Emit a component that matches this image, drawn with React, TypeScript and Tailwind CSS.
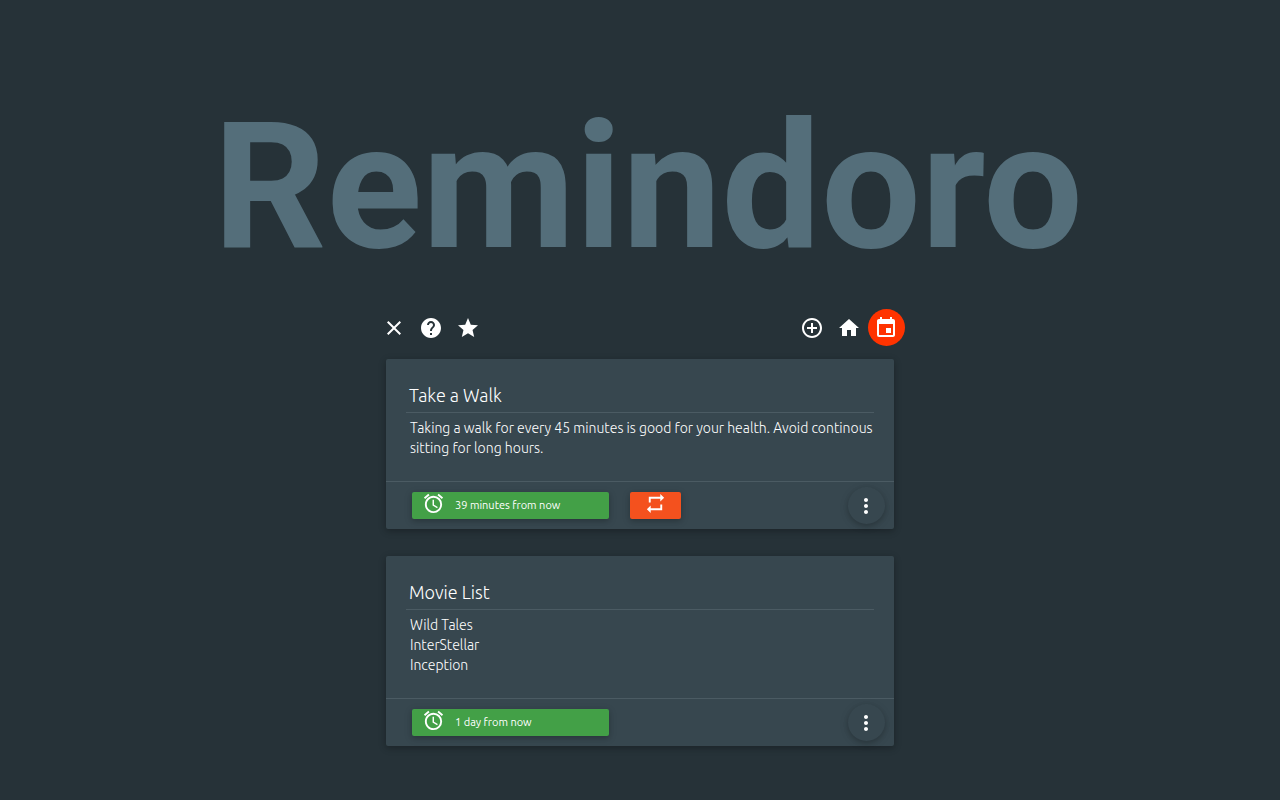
import React from "react";
import type { IconType } from "react-icons";
import {
  MdAccessAlarm,
  MdClose,
  MdControlPoint,
  MdEvent,
  MdHelp,
  MdHome,
  MdMoreVert,
  MdRepeat,
  MdStar,
} from "react-icons/md";

interface Reminder {
  title: string;
  lines: string[];
  due: string;
  repeats: boolean;
}

const reminders: Reminder[] = [
  {
    title: "Take a Walk",
    lines: [
      "Taking a walk for every 45 minutes is good for your health. Avoid continous sitting for long hours.",
    ],
    due: "39 minutes from now",
    repeats: true,
  },
  {
    title: "Movie List",
    lines: ["Wild Tales", "InterStellar", "Inception"],
    due: "1 day from now",
    repeats: false,
  },
];

function NavButton({ icon: Icon, label, active = false }: { icon: IconType; label: string; active?: boolean }) {
  return (
    <button
      type="button"
      aria-label={label}
      className={
        active
          ? "flex size-[37px] items-center justify-center rounded-full bg-[#ff3300] pr-px text-white"
          : "flex size-[37px] items-center justify-center rounded-full pr-px text-white"
      }
    >
      <Icon size={24} />
    </button>
  );
}

function ReminderCard({ reminder }: { reminder: Reminder }) {
  return (
    <article className="rounded-xs bg-[#37474f] shadow-[0_2px_5px_0_rgba(0,0,0,0.16),0_2px_10px_0_rgba(0,0,0,0.12)]">
      <div className="pt-[22px] pr-3 pb-[23px] pl-5">
        <h2 className="mr-2 border-b border-[#4b5b63] px-[3px] pb-0.5 text-lg leading-[29px] font-light text-white">
          {reminder.title}
        </h2>
        <div className="pt-[5px] pl-1 text-sm leading-5 font-light text-white">
          {reminder.lines.map((line) => (
            <p key={line}>{line}</p>
          ))}
        </div>
      </div>
      <footer className="flex h-12 items-center border-t border-[#4b5b63] pr-[9px] pl-[26px]">
        <button
          type="button"
          className="flex h-[27px] w-[197px] items-center gap-2.5 rounded-xs bg-[#43a047] px-[10px] text-left text-[11px] text-white shadow-[0_2px_5px_0_rgba(0,0,0,0.16),0_2px_10px_0_rgba(0,0,0,0.12)]"
        >
          <MdAccessAlarm size={23} className="mb-1" />
          {reminder.due}
        </button>
        {reminder.repeats && (
          <button
            type="button"
            aria-label="Repeat"
            className="ml-[21px] flex h-[27px] w-[51px] items-center justify-center rounded-xs bg-[#f4511e] pb-1 text-white shadow-[0_2px_5px_0_rgba(0,0,0,0.16),0_2px_10px_0_rgba(0,0,0,0.12)]"
          >
            <MdRepeat size={23} />
          </button>
        )}
        <button
          type="button"
          aria-label="More options"
          className="ml-auto flex size-[37px] items-center justify-center rounded-full pr-px text-white shadow-[0_2px_5px_0_rgba(0,0,0,0.16),0_2px_10px_0_rgba(0,0,0,0.12)]"
        >
          <MdMoreVert size={24} />
        </button>
      </footer>
    </article>
  );
}

export default function App() {
  return (
    <div className="min-h-screen bg-[#263238] pt-21 pb-13 font-['Ubuntu','Noto_Sans',sans-serif]">
      <h1 className="pl-4 text-center font-['Roboto',sans-serif] text-[177px] leading-[206px] font-bold text-[#546e7a]">
        Remindoro
      </h1>
      <main className="mx-auto mt-[19px] w-full max-w-[508px]">
        <nav className="-mr-[11px] -ml-2.5 flex justify-between">
          <div className="flex">
            <NavButton icon={MdClose} label="Close" />
            <NavButton icon={MdHelp} label="Help" />
            <NavButton icon={MdStar} label="Rate" />
          </div>
          <div className="flex">
            <NavButton icon={MdControlPoint} label="Add reminder" />
            <NavButton icon={MdHome} label="Home" />
            <NavButton icon={MdEvent} label="Events" active />
          </div>
        </nav>
        <div className="mt-[13px] flex flex-col gap-[27px]">
          {reminders.map((reminder) => (
            <ReminderCard key={reminder.title} reminder={reminder} />
          ))}
        </div>
      </main>
    </div>
  );
}
